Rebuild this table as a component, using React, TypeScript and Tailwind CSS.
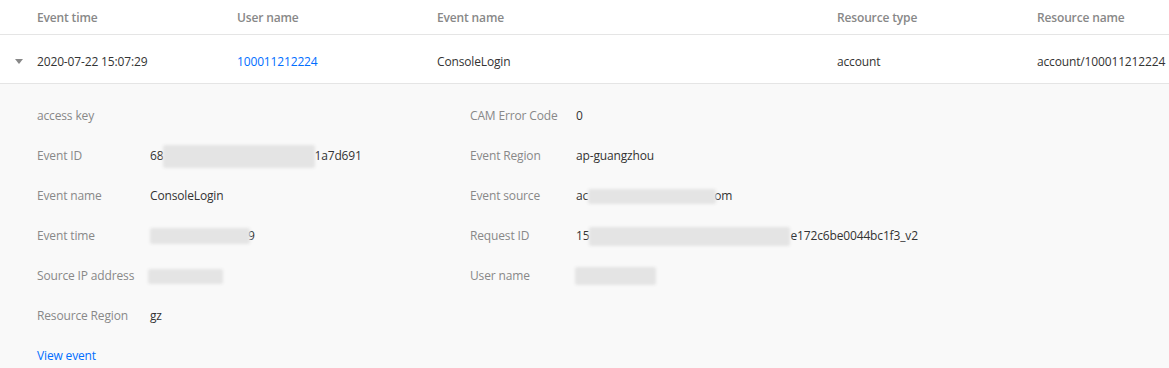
import React from 'react';

const Blur = ({ w, h }: { w: number; h: number }) => (
  <span
    className="inline-block align-middle bg-[#e4e4e4] blur-[1.5px] rounded-[2px]"
    style={{ width: w, height: h }}
  />
);

const App = () => {
  const headers = [
    { label: "Event time", w: "w-[200px]" },
    { label: "User name", w: "w-[200px]" },
    { label: "Event name", w: "w-[400px]" },
    { label: "Resource type", w: "w-[200px]" },
    { label: "Resource name", w: "flex-1" },
  ];

  const left = [
    { label: "access key", value: null },
    {
      label: "Event ID",
      value: (
        <span className="flex items-center">
          <span>68</span>
          <Blur w={152} h={23} />
          <span className="-ml-[1px]">1a7d691</span>
        </span>
      ),
    },
    { label: "Event name", value: <span>ConsoleLogin</span> },
    {
      label: "Event time",
      value: (
        <span className="flex items-center">
          <Blur w={100} h={16} />
          <span className="-ml-[2px]">9</span>
        </span>
      ),
    },
    {
      label: "Source IP address",
      value: (
        <span className="flex items-center -ml-[2px]">
          <Blur w={75} h={15} />
        </span>
      ),
    },
    { label: "Resource Region", value: <span>gz</span> },
  ];

  const right = [
    { label: "CAM Error Code", value: <span>0</span> },
    { label: "Event Region", value: <span>ap-guangzhou</span> },
    {
      label: "Event source",
      value: (
        <span className="flex items-center">
          <span>ac</span>
          <Blur w={128} h={15} />
          <span className="-ml-[2px]">om</span>
        </span>
      ),
    },
    {
      label: "Request ID",
      value: (
        <span className="flex items-center">
          <span>15</span>
          <Blur w={201} h={19} />
          <span>e172c6be0044bc1f3_v2</span>
        </span>
      ),
    },
    {
      label: "User name",
      value: (
        <span className="flex items-center -ml-[1px]">
          <Blur w={81} h={18} />
        </span>
      ),
    },
  ];

  return (
    <div
      className="w-[1169px] h-[368px] bg-white text-[12px] tracking-[-0.15px] overflow-hidden"
      style={{ fontFamily: '"Open Sans", "Noto Sans", sans-serif' }}
    >
      {/* Header */}
      <div className="flex items-center h-[35px] pt-[2px] pl-[37px] border-b border-[#e5e5e5]">
        {headers.map((h) => (
          <div key={h.label} className={`${h.w} font-semibold text-[#888]`}>
            {h.label}
          </div>
        ))}
      </div>

      {/* Row */}
      <div className="relative flex items-center h-[49px] pt-[5px] pl-[37px] border-b border-[#e5e5e5] text-[#333]">
        <span className="absolute left-[15px] top-[24px] w-0 h-0 border-l-[4px] border-r-[4px] border-t-[5px] border-l-transparent border-r-transparent border-t-[#888]" />
        <div className="w-[200px]">2020-07-22 15:07:29</div>
        <div className="w-[200px] text-[#006eff]">100011212224</div>
        <div className="w-[400px]">ConsoleLogin</div>
        <div className="w-[200px]">account</div>
        <div className="flex-1 whitespace-nowrap">account/100011212224</div>
      </div>

      {/* Expanded detail */}
      <div className="bg-[#f9f9f9] h-full pt-[12px] pl-[37px]">
        <div className="flex">
          <div className="w-[433px]">
            {left.map((r) => (
              <div key={r.label} className="flex items-center h-[40px]">
                <div className="w-[113px] text-[#888]">{r.label}</div>
                <div className="text-[#333]">{r.value}</div>
              </div>
            ))}
            <div className="flex items-center h-[40px] text-[#006eff]">View event</div>
          </div>
          <div>
            {right.map((r) => (
              <div key={r.label} className="flex items-center h-[40px]">
                <div className="w-[106px] text-[#888]">{r.label}</div>
                <div className="text-[#333]">{r.value}</div>
              </div>
            ))}
          </div>
        </div>
      </div>
    </div>
  );
};

export default App;
